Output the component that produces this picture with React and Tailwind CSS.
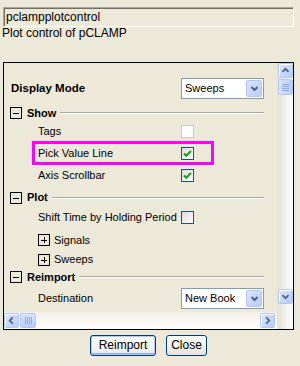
import React from 'react'

const ink = '#4D6185'

function Arrow({ dir }) {
  const d = {
    up: 'M4 9L7.5 5.5L11 9',
    down: 'M4 6L7.5 9.5L11 6',
    left: 'M9 4L5.5 7.5L9 11',
    right: 'M6 4L9.5 7.5L6 11',
  }[dir]
  return (
    <svg width="15" height="15" viewBox="0 0 15 15">
      <path d={d} stroke={ink} strokeWidth="2" fill="none" />
    </svg>
  )
}

function ScrollBtn({ dir, className = '' }) {
  return (
    <div className={`w-[15px] h-[15px] shrink-0 rounded-[2px] border border-[#B3C7F5] bg-gradient-to-br from-[#D9E4FE] to-[#B9CCF8] shadow-[inset_1px_1px_0_#ffffff] flex items-center justify-center ${className}`}>
      <Arrow dir={dir} />
    </div>
  )
}

function Expander({ open }) {
  return (
    <svg width="12" height="12" viewBox="0 0 12 12" shapeRendering="crispEdges" className="shrink-0">
      <rect x="0.5" y="0.5" width="11" height="11" fill="none" stroke="#000" />
      <line x1="3" y1="6" x2="9" y2="6" stroke="#000" />
      {!open && <line x1="6" y1="3" x2="6" y2="9" stroke="#000" />}
    </svg>
  )
}

function Checkbox({ state }) {
  if (state === 'disabled') {
    return <div className="w-[13px] h-[13px] border border-[#CAC8BB] bg-white" />
  }
  return (
    <div className="w-[13px] h-[13px] border border-[#1C5180] bg-gradient-to-br from-[#DCDCD7] to-white flex items-center justify-center">
      {state === 'checked' && (
        <svg width="11" height="11" viewBox="0 0 11 11">
          <path d="M2 5.5L4.3 7.8L9 3" stroke="#21A121" strokeWidth="2.2" fill="none" />
        </svg>
      )}
    </div>
  )
}

function Dropdown({ value }) {
  return (
    <div className="w-[83px] h-[21px] border border-[#7F9DB9] bg-white flex items-center">
      <span className="flex-1 pl-[3px]">{value}</span>
      <div className="w-[16px] h-[17px] mr-[1px] rounded-[2px] border border-[#B3C7F5] bg-gradient-to-br from-[#D9E4FE] to-[#B9CCF8] flex items-center justify-center">
        <svg width="9" height="9" viewBox="0 0 9 9">
          <path d="M1.5 3L4.5 6L7.5 3" stroke={ink} strokeWidth="2" fill="none" />
        </svg>
      </div>
    </div>
  )
}

function SectionHead({ title }) {
  return (
    <div className="flex items-center h-[12px] pl-[6px] pr-[13px]">
      <Expander open />
      <span className="ml-[5px] font-bold">{title}</span>
      <div className="ml-[4px] flex-1 h-[2px] border-t border-t-[#ACA899] border-b border-b-white" />
    </div>
  )
}

function Item({ label, className = '', children }) {
  return (
    <div className={`flex items-center ${className}`}>
      <div className="w-[177px] pl-[34px] whitespace-nowrap">{label}</div>
      {children}
    </div>
  )
}

function SubNode({ label, className = '' }) {
  return (
    <div className={`flex items-center pl-[34px] ${className}`}>
      <Expander open={false} />
      <span className="ml-[4px]">{label}</span>
    </div>
  )
}

export default function App() {
  return (
    <div className="w-[300px] h-[366px] overflow-hidden bg-[#ECE9D8] pt-[7px] text-[11px] leading-[13px] text-black font-['Liberation_Sans',Arial,sans-serif]">
      {/* name box */}
      <div className="ml-[3px] w-[291px] h-[20px] border border-t-[#ACA899] border-l-[#ACA899] border-b-white border-r-white shadow-[inset_1px_1px_0_#716F64] flex items-center pl-[2px] text-[12px]">
        pclampplotcontrol
      </div>
      <div className="pl-[2px] text-[12px] leading-[13px]">Plot control of pCLAMP</div>

      {/* property grid */}
      <div className="mt-[22px] ml-[3px] w-[291px] h-[268px] border border-black flex">
        <div className="w-[273px] flex flex-col">
          <div className="h-[249px] overflow-hidden pt-[13px] flex flex-col">
            <div className="h-[25px] flex items-center">
              <div className="w-[177px] pl-[7px] font-bold text-[11.5px]">Display Mode</div>
              <Dropdown value="Sweeps" />
            </div>

            <div className="h-[19px] flex flex-col justify-end pb-[1px]">
              <SectionHead title="Show" />
            </div>
            <Item label="Tags" className="h-[22px]">
              <Checkbox state="disabled" />
            </Item>
            <div className="relative">
              <Item label="Pick Value Line" className="h-[22px]">
                <Checkbox state="checked" />
              </Item>
              <div className="absolute left-[28px] top-[-1px] w-[182px] h-[24px] border-[3px] border-[#FF00FF]" />
            </div>
            <Item label="Axis Scrollbar" className="h-[23px]">
              <Checkbox state="checked" />
            </Item>

            <div className="h-[19px] pt-[2px] flex flex-col justify-center">
              <SectionHead title="Plot" />
            </div>
            <Item label="Shift Time by Holding Period" className="h-[23px]">
              <Checkbox state="unchecked" />
            </Item>
            <SubNode label="Signals" className="h-[22px]" />
            <SubNode label="Sweeps" className="h-[17px]" />

            <div className="h-[18px] flex flex-col justify-center">
              <SectionHead title="Reimport" />
            </div>
            <div className="h-[24px] flex items-center">
              <div className="w-[177px] pl-[34px]">Destination</div>
              <Dropdown value="New Book" />
            </div>
          </div>

          {/* horizontal scrollbar */}
          <div className="h-[17px] flex items-center bg-gradient-to-b from-[#F1EFE6] to-white">
            <ScrollBtn dir="left" />
            <div className="ml-px w-[16px] h-[15px] rounded-[2px] border border-[#B3C7F5] bg-gradient-to-b from-[#D9E4FE] to-[#B9CCF8] flex items-center justify-center gap-[1px]">
              <div className="w-px h-[7px] bg-[#8EA9E8]" />
              <div className="w-px h-[7px] bg-[#8EA9E8]" />
              <div className="w-px h-[7px] bg-[#8EA9E8]" />
              <div className="w-px h-[7px] bg-[#8EA9E8]" />
            </div>
            <div className="flex-1" />
            <ScrollBtn dir="right" className="mr-[2px]" />
          </div>
        </div>

        {/* vertical scrollbar */}
        <div className="w-[16px] flex flex-col bg-gradient-to-r from-[#E4E1D3] to-white">
          <ScrollBtn dir="up" className="ml-px" />
          <div className="ml-px mt-px w-[15px] h-[16px] rounded-[2px] border border-[#B3C7F5] bg-gradient-to-r from-[#D9E4FE] to-[#B9CCF8] flex flex-col items-center justify-center gap-[1px]">
            <div className="h-px w-[7px] bg-[#8EA9E8]" />
            <div className="h-px w-[7px] bg-[#8EA9E8]" />
            <div className="h-px w-[7px] bg-[#8EA9E8]" />
            <div className="h-px w-[7px] bg-[#8EA9E8]" />
          </div>
          <ScrollBtn dir="down" className="ml-px mt-auto mb-[25px]" />
        </div>
      </div>

      {/* buttons */}
      <div className="mt-[5px] flex text-[12px]">
        <button className="ml-[90px] w-[66px] h-[21px] rounded-[3px] border border-[#003C74] bg-gradient-to-b from-white to-[#ECEBE6] shadow-[inset_0_0_0_1px_#B4CAF4,inset_0_-1px_0_1px_#8CAAE6]">
          Reimport
        </button>
        <button className="ml-[10px] w-[41px] h-[21px] rounded-[3px] border border-[#003C74] bg-gradient-to-b from-white to-[#E3E2DA]">
          Close
        </button>
      </div>
    </div>
  )
}
